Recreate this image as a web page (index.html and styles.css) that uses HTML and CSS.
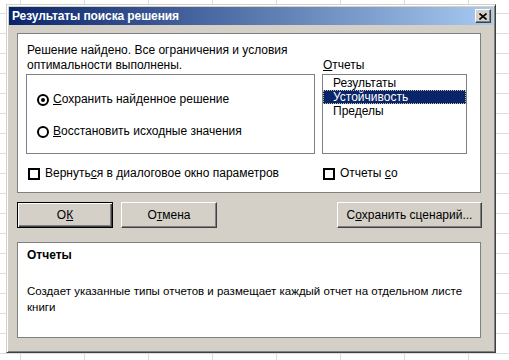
FILE: index.html
```html
<!DOCTYPE html>
<html lang="ru">
<head>
  <meta charset="UTF-8" />
  <title>Результаты поиска решения</title>
  <link rel="stylesheet" href="styles.css">
</head>
<body>
  <div class="dialog">
    <div class="title-bar">
      <span class="title">Результаты поиска решения</span>
      <span class="close-btn">
        <svg width="8" height="7" viewBox="0 0 8 7"><path d="M0.5 0.5L7.5 6.5M7.5 0.5L0.5 6.5" stroke="#000" stroke-width="1.6" fill="none"/></svg>
      </span>
    </div>

    <div class="dialog-body">
      <div class="panel main-panel">
        <p class="message">Решение найдено. Все ограничения и условия<br>оптимальности выполнены.</p>
        <div class="list-label"><u>О</u>тчеты</div>

        <div class="options">
          <label class="radio checked"><span class="circle"></span><span><u>С</u>охранить найденное решение</span></label>
          <label class="radio"><span class="circle"></span><span><u>В</u>осстановить исходные значения</span></label>
        </div>

        <ul class="listbox">
          <li>Результаты</li>
          <li class="selected">Устойчивость</li>
          <li>Пределы</li>
        </ul>

        <label class="check check-left"><span class="box"></span><span>Вернуть<u>с</u>я в диалоговое окно параметров</span></label>
        <label class="check check-right"><span class="box"></span><span>Отчеты <u>с</u>о</span></label>
      </div>

      <div class="buttons">
        <button class="btn default">О<u>К</u></button>
        <button class="btn">О<u>т</u>мена</button>
        <button class="btn wide">С<u>о</u>хранить сценарий...</button>
      </div>

      <div class="panel help-panel">
        <div class="help-title">Отчеты</div>
        <p class="help-text">Создает указанные типы отчетов и размещает каждый отчет на отдельном листе книги</p>
      </div>
    </div>
  </div>
</body>
</html>
```

FILE: styles.css
```css
body {
  margin: 0;
  width: 509px;
  height: 360px;
  overflow: hidden;
  font-family: 'Liberation Sans', Arial, sans-serif;
  font-size: 12px;
  color: #000;
  background-color: #fff;
  background-image:
    linear-gradient(to right, #dadcdd 1px, transparent 1px),
    linear-gradient(to bottom, #dadcdd 1px, transparent 1px);
  background-size: 64px 20px;
  background-position: 20px 13px;
}

.dialog {
  box-sizing: border-box;
  width: 490px;
  height: 349px;
  margin: 4px 0 0 6px;
  padding: 2px;
  background: #d4d0c8;
  border: 1px solid;
  border-color: #d4d0c8 #404040 #404040 #d4d0c8;
  box-shadow: inset 1px 1px #fff, inset -1px -1px #808080;
  display: flex;
  flex-direction: column;
}

.title-bar {
  height: 18px;
  flex-shrink: 0;
  display: flex;
  align-items: center;
  justify-content: space-between;
  padding: 0 2px 0 3px;
  background: linear-gradient(to right, #0a246a, #a6caf0);
  color: #fff;
  font-weight: bold;
  letter-spacing: -0.1px;
}

.close-btn {
  box-sizing: border-box;
  width: 16px;
  height: 14px;
  display: flex;
  align-items: center;
  justify-content: center;
  background: #d4d0c8;
  border: 1px solid;
  border-color: #fff #404040 #404040 #fff;
  box-shadow: inset -1px -1px #808080;
}

.dialog-body {
  flex: 1;
  display: flex;
  flex-direction: column;
  padding: 8px 11px 0 8px;
}

.panel {
  background: #fff;
  border: 1px solid #808080;
  margin-right: 1px;
}

.main-panel {
  display: grid;
  grid-template-columns: 289px 145px;
  column-gap: 7px;
  padding: 0 13px 11px 8px;
  line-height: 15px;
}

.message {
  margin: 9px 0 1px 1px;
}

.list-label {
  align-self: end;
  margin-bottom: 1px;
  padding-left: 1px;
}

.options {
  box-sizing: border-box;
  height: 80px;
  border: 1px solid #808080;
  display: flex;
  flex-direction: column;
  gap: 17px;
  padding: 17px 0 0 10px;
}

.radio,
.check {
  display: flex;
  align-items: center;
  gap: 4px;
}

.circle {
  box-sizing: border-box;
  width: 12px;
  height: 12px;
  border: 2px solid #000;
  border-radius: 50%;
  background: #fff;
  display: flex;
  align-items: center;
  justify-content: center;
}

.radio.checked .circle::after {
  content: '';
  width: 4px;
  height: 4px;
  border-radius: 50%;
  background: #000;
}

.listbox {
  box-sizing: border-box;
  height: 80px;
  margin: 0;
  padding: 1px 0 0;
  list-style: none;
  border: 1px solid #808080;
  line-height: 14px;
}

.listbox li {
  padding-left: 10px;
}

.listbox li.selected {
  background: #0a246a;
  color: #fff;
  outline: 1px dotted #c8c39a;
  outline-offset: -1px;
}

.check {
  margin-top: 12px;
  gap: 5px;
}

.check-left {
  padding-left: 2px;
}

.check-right {
  padding-left: 1px;
}

.box {
  box-sizing: border-box;
  width: 12px;
  height: 12px;
  border: 2px solid #000;
  background: #fff;
}

.buttons {
  display: flex;
  gap: 8px;
  margin-top: 9px;
}

.btn {
  box-sizing: border-box;
  width: 96px;
  height: 26px;
  padding: 0;
  font-family: inherit;
  font-size: 12px;
  color: #000;
  background: #d4d0c8;
  border: 1px solid;
  border-color: #fff #404040 #404040 #fff;
  box-shadow: inset -1px -1px #808080;
}

.btn.default {
  border: 1px solid #000;
  box-shadow: inset 1px 1px #fff, inset -1px -1px #404040, inset -2px -2px #808080;
}

.btn.wide {
  width: 145px;
  margin-left: auto;
}

.help-panel {
  margin-top: 14px;
  height: 96px;
  box-sizing: border-box;
  padding: 5px 6px 0 9px;
  line-height: 15px;
}

.help-title {
  font-weight: bold;
}

.help-text {
  margin: 20px 0 0;
  font-size: 11.5px;
  line-height: 16px;
}
```
